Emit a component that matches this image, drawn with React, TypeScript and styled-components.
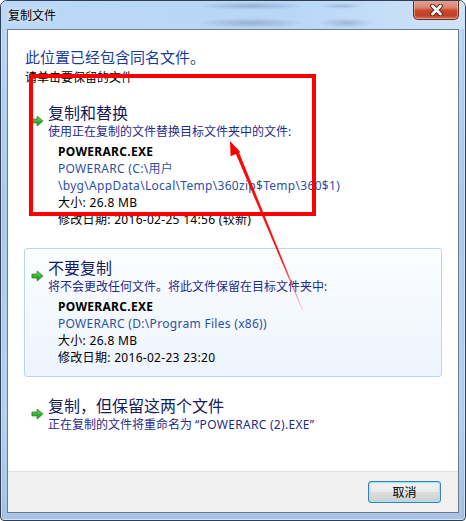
import React from "react";
import styled, { createGlobalStyle } from "styled-components";

const GlobalStyle = createGlobalStyle`
  html, body {
    margin: 0;
    padding: 0;
    background: #ffffff;
  }
  body {
    font-family: "Noto Sans", "Noto Sans CJK SC", sans-serif;
  }
`;

const GreenArrow = () => (
  <svg width="13" height="12" viewBox="0 0 13 12">
    <defs>
      <linearGradient id="ga" x1="0" y1="0" x2="0" y2="1">
        <stop offset="0" stopColor="#7fe35a" />
        <stop offset="0.55" stopColor="#2fb52a" />
        <stop offset="1" stopColor="#17921a" />
      </linearGradient>
    </defs>
    <path
      d="M1 4.2 H6.2 V1.2 L11.8 6 L6.2 10.8 V7.8 H1 Z"
      fill="url(#ga)"
      stroke="#1a7a1c"
      strokeWidth="0.8"
      strokeLinejoin="round"
    />
  </svg>
);

const CloseGlyph = () => (
  <svg width="15" height="12" viewBox="0 0 15 12">
    <path d="M3.5 2 L11.5 10 M11.5 2 L3.5 10" stroke="#5a2418" strokeWidth="4.6" strokeLinecap="round" />
    <path d="M3.5 2 L11.5 10 M11.5 2 L3.5 10" stroke="#ffffff" strokeWidth="2.8" strokeLinecap="round" />
  </svg>
);

const App = () => {
  return (
    <>
      <GlobalStyle />
      <Window>
        <TitleBar>
          <Caption>复制文件</Caption>
          <CloseButton>
            <CloseGlyph />
          </CloseButton>
        </TitleBar>
        <Content>
          <Body>
            <Heading>此位置已经包含同名文件。</Heading>
            <SubText>请单击要保留的文件</SubText>
            <Options>
              <Option>
                <ArrowCell>
                  <GreenArrow />
                </ArrowCell>
                <OptionText>
                  <OptionTitle>复制和替换</OptionTitle>
                  <OptionDesc>使用正在复制的文件替换目标文件夹中的文件:</OptionDesc>
                  <Details>
                    <FileName>POWERARC.EXE</FileName>
                    <FilePath>POWERARC (C:\用户</FilePath>
                    <FilePath>\byg\AppData\Local\Temp\360zip$Temp\360$1)</FilePath>
                    <Line>大小: 26.8 MB</Line>
                    <Line>修改日期: 2016-02-25 14:56 (较新)</Line>
                  </Details>
                </OptionText>
              </Option>
              <Option $active>
                <ArrowCell>
                  <GreenArrow />
                </ArrowCell>
                <OptionText>
                  <OptionTitle>不要复制</OptionTitle>
                  <OptionDesc>将不会更改任何文件。将此文件保留在目标文件夹中:</OptionDesc>
                  <Details>
                    <FileName>POWERARC.EXE</FileName>
                    <FilePath>POWERARC (D:\Program Files (x86))</FilePath>
                    <Line>大小: 26.8 MB</Line>
                    <Line>修改日期: 2016-02-23 23:20</Line>
                  </Details>
                </OptionText>
              </Option>
              <Option>
                <ArrowCell>
                  <GreenArrow />
                </ArrowCell>
                <OptionText>
                  <OptionTitle>复制，但保留这两个文件</OptionTitle>
                  <OptionDesc>
                    正在复制的文件将重命名为<Quoted>“POWERARC (2).EXE”</Quoted>
                  </OptionDesc>
                </OptionText>
              </Option>
            </Options>
          </Body>
          <Footer>
            <Button>取消</Button>
          </Footer>
        </Content>

        <Highlight />
        <Annotation width="466" height="521" viewBox="0 0 466 521">
          <defs>
            <linearGradient id="redfade" x1="230" y1="142" x2="303" y2="312" gradientUnits="userSpaceOnUse">
              <stop offset="0" stopColor="#ff0000" stopOpacity="1" />
              <stop offset="0.7" stopColor="#ff0000" stopOpacity="0.9" />
              <stop offset="1" stopColor="#ff0000" stopOpacity="0.15" />
            </linearGradient>
          </defs>
          <polygon points="234.2,150 237.4,148.6 303.4,311 302.6,311.3" fill="url(#redfade)" />
          <polygon points="230,141 240.4,152.3 230.6,156.2" fill="#ff0000" />
        </Annotation>
      </Window>
    </>
  );
};

const Window = styled.div`
  position: relative;
  width: 466px;
  height: 521px;
  box-sizing: border-box;
  display: flex;
  flex-direction: column;
  padding: 0 6px 7px 6px;
  border: 1px solid #2f3f55;
  border-radius: 7px 7px 4px 4px;
  overflow: hidden;
  background:
    linear-gradient(90deg, rgba(120, 150, 190, 0.35) 0, rgba(255, 255, 255, 0) 3px),
    linear-gradient(270deg, rgba(120, 150, 190, 0.35) 0, rgba(255, 255, 255, 0) 3px),
    linear-gradient(180deg, #b7d4f3 0%, #bdd8f5 6%, #aecbec 40%, #b9d4f1 80%, #a6c3e6 100%);
  box-shadow: inset 0 0 0 1px rgba(255, 255, 255, 0.55);
`;

const TitleBar = styled.div`
  height: 28px;
  display: flex;
  justify-content: space-between;
  align-items: flex-start;
  margin: 0 -6px;
  padding: 0 6px 0 7px;
  background:
    radial-gradient(ellipse 55px 4px at 250px 5px, rgba(110, 130, 160, 0.45), rgba(110, 130, 160, 0) 100%),
    radial-gradient(ellipse 22px 3px at 340px 5px, rgba(110, 130, 160, 0.4), rgba(110, 130, 160, 0) 100%),
    radial-gradient(ellipse 55px 5px at 250px 22px, rgba(110, 130, 160, 0.45), rgba(110, 130, 160, 0) 100%),
    radial-gradient(ellipse 28px 5px at 345px 22px, rgba(110, 130, 160, 0.4), rgba(110, 130, 160, 0) 100%),
    linear-gradient(90deg, #bcd8f6 0%, #b8d6f7 60%, #cfe3f8 100%);
`;

const Caption = styled.span`
  align-self: center;
  margin-top: 1px;
  font-size: 12px;
  line-height: 16px;
  color: #000000;
  text-shadow: 0 0 6px rgba(255, 255, 255, 0.9);
`;

const CloseButton = styled.div`
  width: 46px;
  height: 20px;
  margin-top: -1px;
  box-sizing: border-box;
  display: flex;
  align-items: center;
  justify-content: center;
  border: 1px solid #6d2a1e;
  border-top: none;
  border-radius: 0 0 5px 5px;
  background: linear-gradient(180deg, #e6a595 0%, #d98470 40%, #c8492f 55%, #bf3f28 80%, #d06c54 100%);
  box-shadow: inset 0 0 0 1px rgba(255, 210, 200, 0.5);
`;

const Content = styled.div`
  flex: 1;
  display: flex;
  flex-direction: column;
  border: 1px solid #6b7b90;
  background: #ffffff;
  min-height: 0;
`;

const Body = styled.div`
  flex: 1;
  padding: 17px 16px 0 16px;
`;

const Heading = styled.div`
  margin-left: 1px;
  font-size: 15px;
  line-height: 20px;
  color: #1a3d9c;
`;

const SubText = styled.div`
  margin: 3px 0 0 1px;
  font-size: 12px;
  line-height: 16px;
  color: #000000;
`;

const Options = styled.div`
  margin-top: 7px;
  display: flex;
  flex-direction: column;
  gap: 9px;
`;

const Option = styled.div<{ $active?: boolean }>`
  display: flex;
  gap: 4px;
  padding: 9px 10px 10px 6px;
  border: 1px solid ${(p) => (p.$active ? "#bcd4f0" : "transparent")};
  border-radius: 3px;
  background: ${(p) =>
    p.$active ? "linear-gradient(180deg, #fbfdff 0%, #f3f8fe 60%, #edf4fd 100%)" : "transparent"};
`;

const ArrowCell = styled.div`
  width: 13px;
  padding-top: 7px;
  flex-shrink: 0;
  filter: drop-shadow(0 0 1px rgba(0, 0, 0, 0.15));
`;

const OptionText = styled.div`
  display: flex;
  flex-direction: column;
`;

const OptionTitle = styled.div`
  font-size: 16px;
  line-height: 20px;
  color: #151c5e;
`;

const OptionDesc = styled.div`
  font-size: 12px;
  line-height: 17px;
  color: #1f2b8c;
  white-space: nowrap;
`;

const Quoted = styled.span`
  margin-left: 3px;
  letter-spacing: 0.3px;
`;

const Details = styled.div`
  margin-top: 3px;
  padding-left: 10px;
  display: flex;
  flex-direction: column;
`;

const Line = styled.div`
  font-size: 12px;
  line-height: 17px;
  letter-spacing: 0.3px;
  color: #000000;
  white-space: nowrap;
`;

const FileName = styled(Line)`
  font-weight: 700;
`;

const FilePath = styled(Line)`
  color: #2d50a6;
`;

const Footer = styled.div`
  height: 40px;
  border-top: 1px solid #dfdfdf;
  background: #f0f0f0;
  display: flex;
  align-items: center;
  justify-content: flex-end;
  padding-right: 17px;
`;

const Button = styled.div`
  width: 73px;
  height: 22px;
  box-sizing: border-box;
  display: flex;
  align-items: center;
  justify-content: center;
  font-size: 12px;
  color: #000000;
  border: 1px solid #3c7fb1;
  border-radius: 3px;
  background: linear-gradient(180deg, #f2f2f2 0%, #ebebeb 48%, #dddddd 52%, #cfcfcf 100%);
  box-shadow: inset 0 0 0 1px #9ee6fb, inset 0 0 2px 1px rgba(120, 220, 250, 0.6);
`;

const Highlight = styled.div`
  position: absolute;
  left: 28px;
  top: 73px;
  width: 287px;
  height: 142px;
  box-sizing: border-box;
  border: 4px solid #ff0000;
  pointer-events: none;
`;

const Annotation = styled.svg`
  position: absolute;
  left: -1px;
  top: -1px;
  pointer-events: none;
`;

export default App;
